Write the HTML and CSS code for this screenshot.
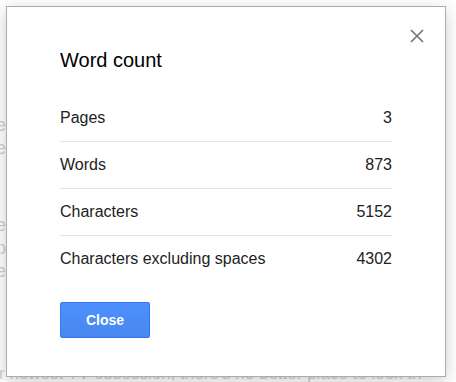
FILE: index.html
```html
<!DOCTYPE html>
<html>
  <head>
    <title>Word count</title>
    <meta charset="UTF-8">
    <meta name="viewport" content="width=device-width,initial-scale=1">
    <link rel="stylesheet" href="styles.css">
  </head>

  <body>
    <main class="page">
      <div class="page-lines">
        <div class="line"><span>on the show we love</span></div>
        <div class="line"><span>if you want to see more</span></div>
        <div class="line line-3"><span>all the trailers are here</span></div>
        <div class="line"><span>find the next big drop</span></div>
        <div class="line"><span>every single episode</span></div>
      </div>
      <p class="page-last">r newest TV obsession, there's no better place to look th</p>
    </main>

    <div class="overlay"></div>

    <section class="dialog" role="dialog">
      <button class="dialog-x" aria-label="Close">
        <svg width="14" height="14" viewBox="0 0 14 14">
          <path d="M1 1 L13 13 M13 1 L1 13" stroke="#777" stroke-width="1.7" fill="none"/>
        </svg>
      </button>
      <h2 class="dialog-title">Word count</h2>
      <div class="stats">
        <div class="stat"><span>Pages</span><span>3</span></div>
        <div class="stat"><span>Words</span><span>873</span></div>
        <div class="stat"><span>Characters</span><span>5152</span></div>
        <div class="stat"><span>Characters excluding spaces</span><span>4302</span></div>
      </div>
      <button class="btn-close">Close</button>
    </section>
  </body>
</html>
```

FILE: styles.css
```css
html * {
  box-sizing: border-box;
}

body {
  margin: 0;
  width: 456px;
  height: 382px;
  overflow: hidden;
  position: relative;
  background: #fff;
  font-family: "Liberation Sans", Arial, sans-serif;
}

.page {
  height: 382px;
  display: flex;
  flex-direction: column;
  color: #888;
  font-size: 18px;
}

.page-lines {
  width: 6px;
  padding-top: 114px;
  display: flex;
  flex-direction: column;
}

.line {
  display: flex;
  justify-content: flex-end;
  height: 23px;
  line-height: 23px;
  white-space: nowrap;
}

.line-3 {
  margin-top: 54px;
}

.page-last {
  margin: auto 0 0 -1px;
  height: 19px;
  font-size: 17px;
  line-height: 22px;
  white-space: nowrap;
}

.overlay {
  position: absolute;
  inset: 0;
  background: rgba(255, 255, 255, 0.6);
}

.dialog {
  position: absolute;
  top: 6px;
  left: 6px;
  width: 440px;
  padding: 41px 53px 38px;
  background: #fff;
  border: 1px solid #acacac;
  box-shadow: 0 4px 16px rgba(0, 0, 0, 0.2);
  color: #222;
}

.dialog-x {
  position: absolute;
  top: 22px;
  right: 21px;
  width: 14px;
  height: 14px;
  padding: 0;
  border: 0;
  background: none;
  cursor: pointer;
}

.dialog-x svg {
  display: block;
}

.dialog-title {
  margin: 0 0 23px;
  font-size: 20px;
  font-weight: normal;
  line-height: 24px;
  color: #000;
}

.stat {
  display: flex;
  justify-content: space-between;
  align-items: center;
  height: 47px;
  border-bottom: 1px solid #e5e5e5;
  font-size: 16px;
}

.stat:last-child {
  height: 46px;
  border-bottom: 0;
}

.btn-close {
  display: block;
  margin-top: 20px;
  width: 90px;
  height: 36px;
  border: 1px solid #3079ed;
  border-radius: 2px;
  background: linear-gradient(#4d90fe, #4787ed);
  color: #fff;
  font-family: "Liberation Sans", Arial, sans-serif;
  font-size: 14px;
  font-weight: bold;
  cursor: pointer;
}
```
